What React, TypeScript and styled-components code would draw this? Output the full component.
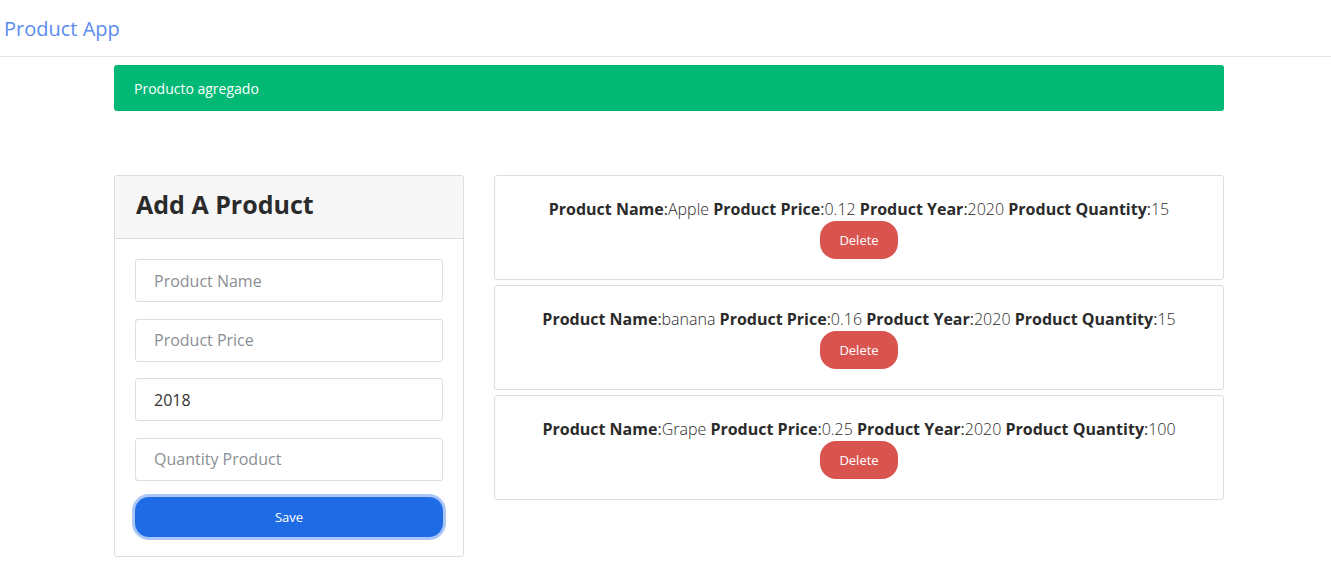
import styled, { createGlobalStyle } from "styled-components";

const GlobalStyle = createGlobalStyle`
  * { box-sizing: border-box; }
  body {
    margin: 0;
    font-family: "Open Sans", "Noto Sans", sans-serif;
    color: #333;
    background: #fff;
  }
`;

const Navbar = styled.nav`
  height: 57px;
  border-bottom: 1px solid #e5e5e5;
  display: flex;
  align-items: center;
  padding: 0 4px;
`;

const Brand = styled.a`
  font-size: 20px;
  color: #5b8def;
  text-decoration: none;
  margin-top: 1px;
`;

const Container = styled.div`
  width: 1110px;
  margin-left: 114px;
  padding-top: 8px;
`;

const Alert = styled.div`
  background: #02b875;
  color: #fff;
  font-size: 14px;
  height: 46px;
  display: flex;
  align-items: center;
  padding: 0 20px;
  border-radius: 3px;
`;

const Row = styled.div`
  display: flex;
  gap: 30px;
  margin-top: 64px;
  align-items: flex-start;
`;

const Card = styled.div`
  width: 350px;
  border: 1px solid #ddd;
  border-radius: 3px;
`;

const CardHeader = styled.div`
  background: #f7f7f7;
  border-bottom: 1px solid #ddd;
  height: 63px;
  display: flex;
  align-items: center;
  padding: 0 21px 6px;
`;

const Title = styled.h3`
  margin: 0;
  font-size: 25px;
  font-weight: 700;
  color: #2b2b2b;
`;

const Form = styled.form`
  padding: 20px 20px 19px;
  display: flex;
  flex-direction: column;
  gap: 16.5px;
`;

const Input = styled.input`
  height: 43px;
  border: 1px solid #ddd;
  border-radius: 3px;
  padding: 0 18px;
  font-family: inherit;
  font-size: 16px;
  color: #333;
  &::placeholder { color: #8a8f95; }
`;

const SaveButton = styled.button`
  height: 40px;
  border: none;
  border-radius: 14px;
  background: #1f6be6;
  color: #fff;
  font-family: inherit;
  font-size: 13px;
  box-shadow: 0 0 0 3px #a9c6f6;
`;

const List = styled.div`
  flex: 1;
  display: flex;
  flex-direction: column;
  gap: 5px;
`;

const ProductCard = styled.div`
  border: 1px solid #ddd;
  border-radius: 3px;
  height: 105px;
  display: flex;
  flex-direction: column;
  align-items: center;
  padding-top: 22px;
`;

const ProductText = styled.div`
  font-size: 16px;
  color: #2b2b2b;
  line-height: 22px;
  b { font-weight: 700; }
  span { font-weight: 300; }
`;

const DeleteButton = styled.button`
  margin-top: 1px;
  width: 78px;
  height: 38px;
  border: none;
  border-radius: 16px;
  background: #d9534f;
  color: #fff;
  font-family: inherit;
  font-size: 13px;
`;

const products = [
  { name: "Apple", price: "0.12", year: "2020", quantity: "15" },
  { name: "banana", price: "0.16", year: "2020", quantity: "15" },
  { name: "Grape", price: "0.25", year: "2020", quantity: "100" },
];

export default function App() {
  return (
    <>
      <GlobalStyle />
      <Navbar>
        <Brand href="#">Product App</Brand>
      </Navbar>
      <Container>
        <Alert>Producto agregado</Alert>
        <Row>
          <Card>
            <CardHeader>
              <Title>Add A Product</Title>
            </CardHeader>
            <Form onSubmit={(e) => e.preventDefault()}>
              <Input placeholder="Product Name" />
              <Input placeholder="Product Price" />
              <Input defaultValue="2018" />
              <Input placeholder="Quantity Product" />
              <SaveButton type="submit">Save</SaveButton>
            </Form>
          </Card>
          <List>
            {products.map((p) => (
              <ProductCard key={p.name}>
                <ProductText>
                  <b>Product Name</b>:<span>{p.name}</span> <b>Product Price</b>:
                  <span>{p.price}</span> <b>Product Year</b>:<span>{p.year}</span>{" "}
                  <b>Product Quantity</b>:<span>{p.quantity}</span>
                </ProductText>
                <DeleteButton>Delete</DeleteButton>
              </ProductCard>
            ))}
          </List>
        </Row>
      </Container>
    </>
  );
}
